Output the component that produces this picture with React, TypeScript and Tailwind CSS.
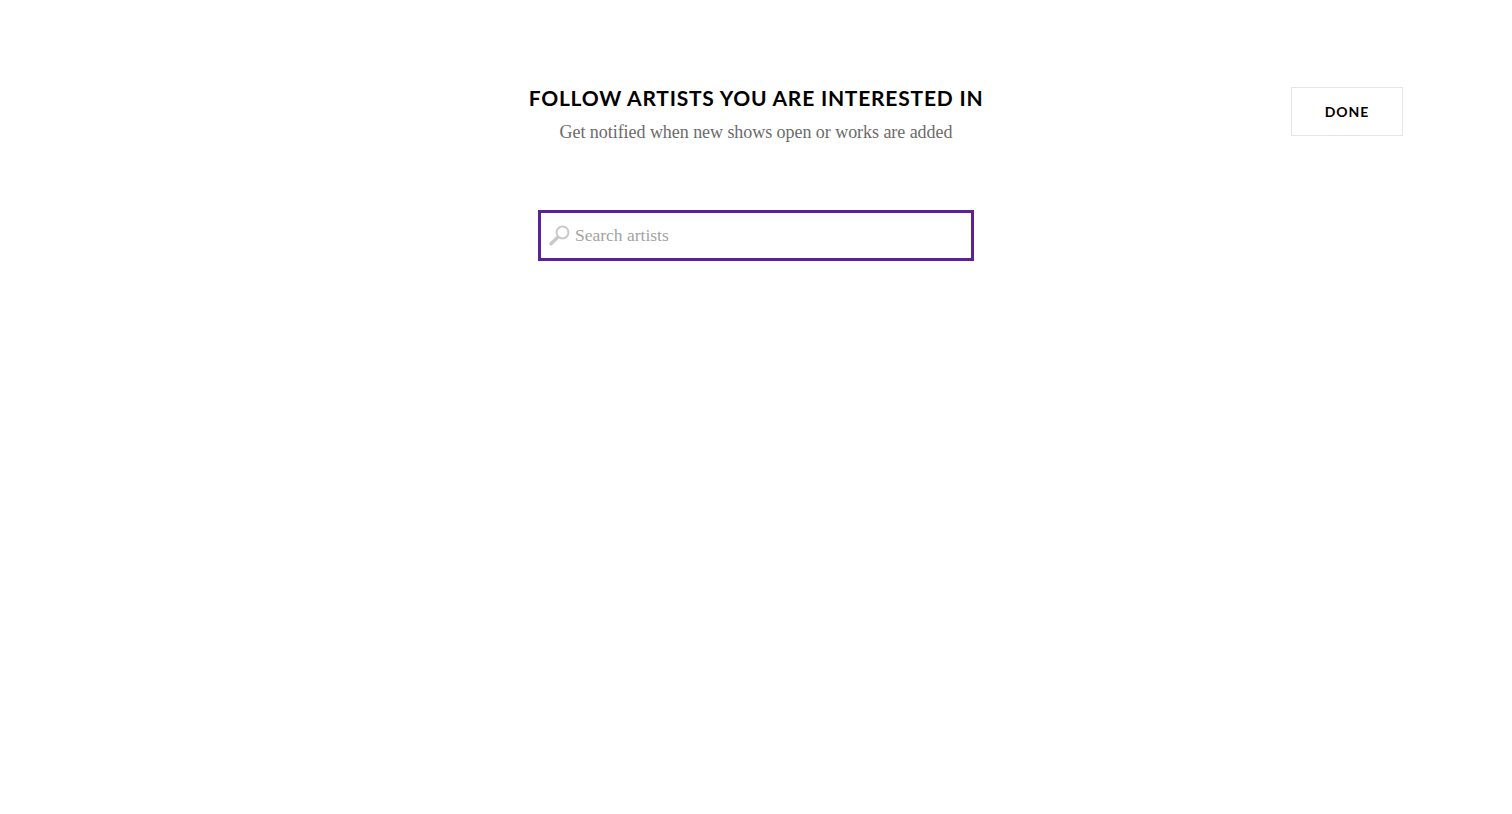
import React from 'react';

function SearchIcon() {
  return (
    <svg width="21" height="21" viewBox="0 0 21 21" fill="none" className="shrink-0">
      <circle cx="13.5" cy="7.5" r="5.9" stroke="#c9c9c9" strokeWidth="2" />
      <path d="M8.8 12.2 2 18.8" stroke="#c9c9c9" strokeWidth="3.4" strokeLinecap="round" />
    </svg>
  );
}

export default function App() {
  return (
    <div className="min-h-[814px] bg-white">
      <div className="grid grid-cols-[1fr_auto_1fr] px-[109px] pt-[82px]">
        <div />
        <div className="flex flex-col items-center">
          <h1 className="font-['Lato',sans-serif] text-[21px] leading-[32px] font-bold tracking-[0.78px] text-black">
            FOLLOW ARTISTS YOU ARE INTERESTED IN
          </h1>
          <p className="mt-[2px] font-['Liberation_Serif',serif] text-[18px] leading-[32px] tracking-[-0.05px] text-[#6b6b6b]">
            Get notified when new shows open or works are added
          </p>
        </div>
        <div className="flex justify-end pt-[5px]">
          <button className="h-[49px] w-[112px] border border-[#e5e5e5] bg-white pb-[1px] font-['Lato',sans-serif] text-[14px] font-bold tracking-[0.9px] text-black">
            DONE
          </button>
        </div>
      </div>
      <div className="mt-[62px] flex justify-center">
        <div className="flex h-[51px] w-[436px] items-center gap-[5px] border-[3px] border-[#5b2396] pl-[8px]">
          <SearchIcon />
          <input
            placeholder="Search artists"
            className="w-full bg-transparent font-['Liberation_Serif',serif] text-[17.5px] text-[#555] outline-none placeholder:text-[#a3a3a3]"
          />
        </div>
      </div>
    </div>
  );
}
